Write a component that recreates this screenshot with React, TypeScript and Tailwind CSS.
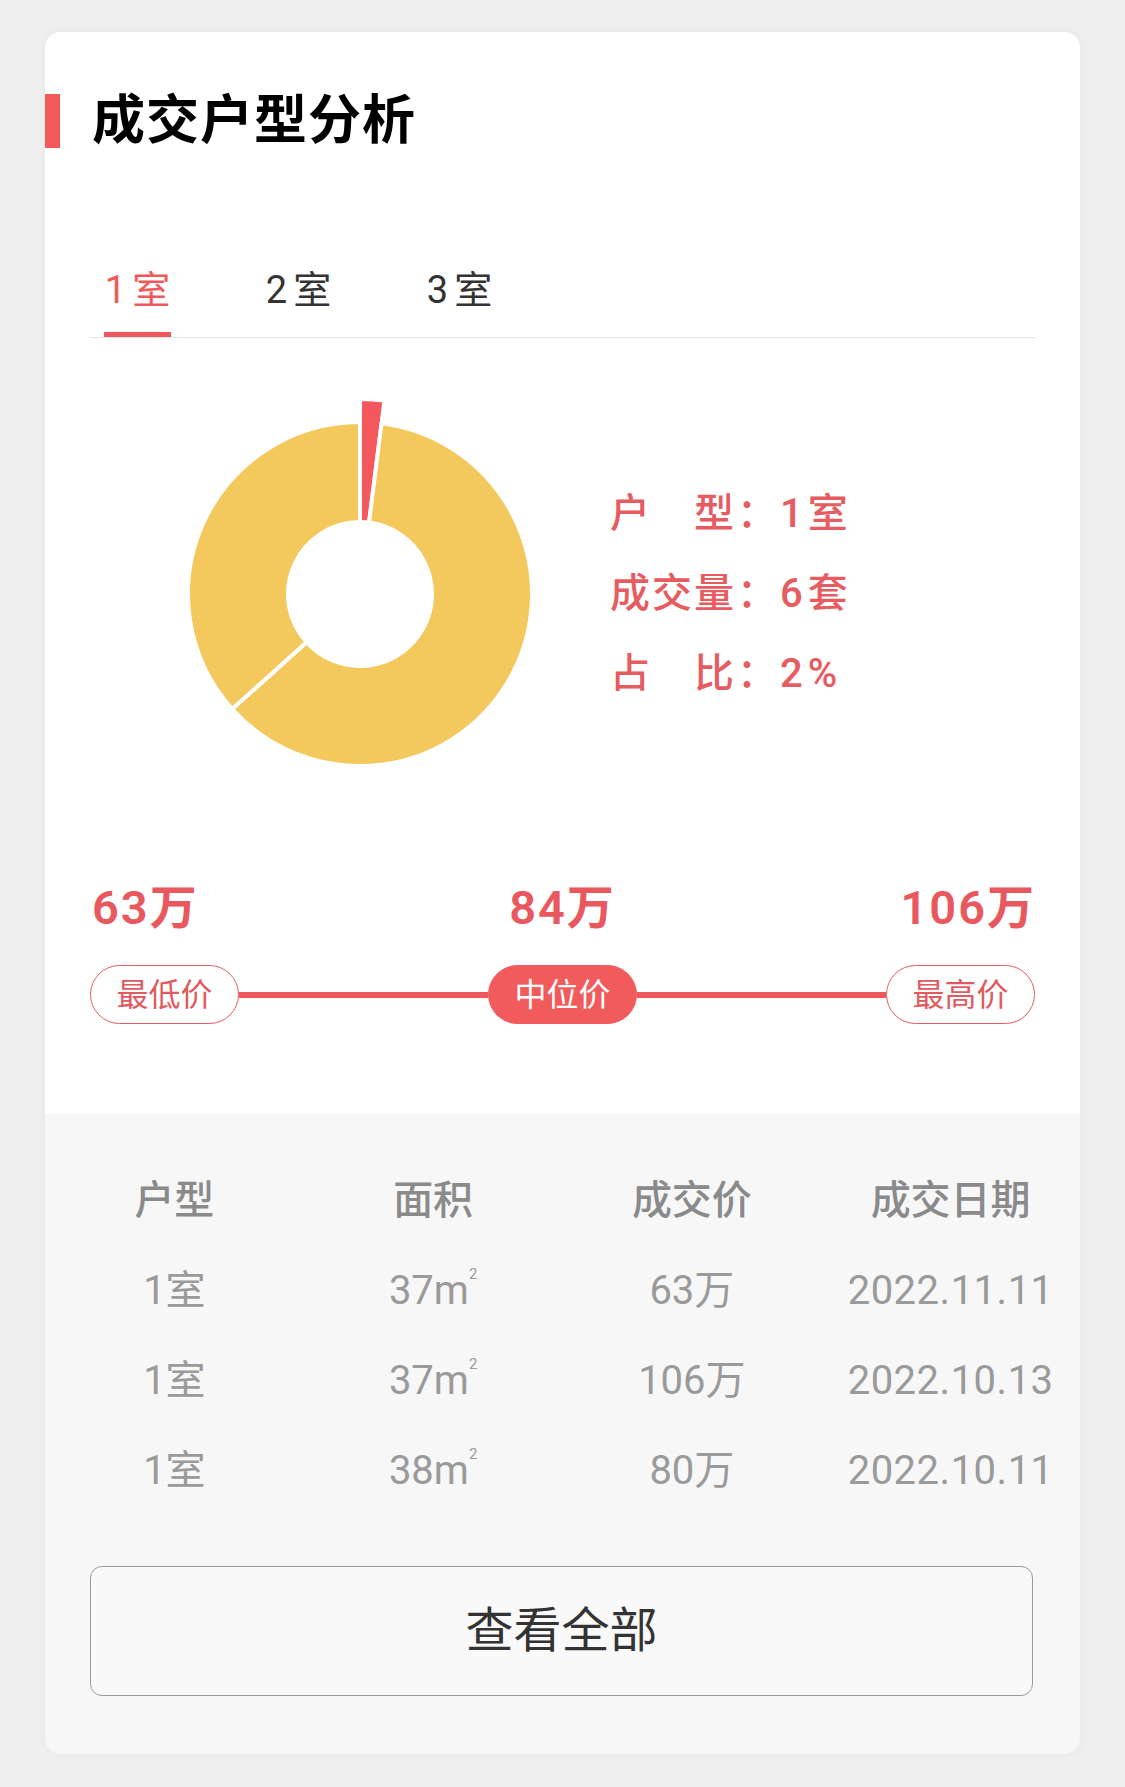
import React from "react";

const FONT = '"Roboto", "Noto Sans CJK SC", sans-serif';

const TABS = ["1室", "2室", "3室"];

const ROWS = [
  { type: "1室", area: "37", price: "63万", date: "2022.11.11" },
  { type: "1室", area: "37", price: "106万", date: "2022.10.13" },
  { type: "1室", area: "38", price: "80万", date: "2022.10.11" },
];

// slices in degrees, clockwise from 12 o'clock
const SLICES = [
  { from: 0, to: 7.2, color: "#f4575c", r: 195 },
  { from: 7.2, to: 228, color: "#f3c85c", r: 172 },
  { from: 228, to: 360, color: "#f3c85c", r: 172 },
];

function pt(r: number, deg: number) {
  const a = (deg * Math.PI) / 180;
  return [200 + r * Math.sin(a), 200 - r * Math.cos(a)];
}

function arc(from: number, to: number, ro: number, ri: number) {
  const large = to - from > 180 ? 1 : 0;
  const [x1, y1] = pt(ro, from);
  const [x2, y2] = pt(ro, to);
  const [x3, y3] = pt(ri, to);
  const [x4, y4] = pt(ri, from);
  return `M${x1} ${y1} A${ro} ${ro} 0 ${large} 1 ${x2} ${y2} L${x3} ${y3} A${ri} ${ri} 0 ${large} 0 ${x4} ${y4} Z`;
}

function Donut() {
  return (
    <svg width="400" height="400" viewBox="0 0 400 400" className="shrink-0">
      {SLICES.map((s, i) => (
        <path key={i} d={arc(s.from, s.to, s.r, 72)} fill={s.color} stroke="#ffffff" strokeWidth="4" strokeLinejoin="round" />
      ))}
    </svg>
  );
}

function Legend({ label, value }: { label: string; value: string }) {
  return (
    <div className="h-[80px] flex items-center text-[40px] leading-none font-medium text-[#e65c60]">
      <span className="w-[124px] flex justify-between">
        {label.split("").map((c, i) => (
          <span key={i}>{c}</span>
        ))}
      </span>
      <span className="w-[46px] text-center">：</span>
      <span className="tracking-[5px]">{value}</span>
    </div>
  );
}

function Pill({ text, active }: { text: string; active?: boolean }) {
  return (
    <div
      className={`w-[149px] h-[59px] shrink-0 rounded-full flex items-center justify-center text-[32px] leading-none border ${
        active ? "bg-[#f25b5b] border-[#f25b5b] text-white" : "bg-white border-[#e45c60] text-[#e05a5f]"
      }`}
    >
      {text}
    </div>
  );
}

export default function App() {
  return (
    <div className="min-h-[1787px] bg-[#efefef] pt-[32px] pb-[32px]" style={{ fontFamily: FONT }}>
      <div className="mx-[45px] rounded-[16px] overflow-hidden shadow-[0_0_12px_rgba(0,0,0,0.04)]">
        {/* white part */}
        <div className="bg-white pt-[62px] pb-[90px]">
          <div className="flex items-center h-[54px]">
            <div className="w-[15px] h-[54px] bg-[#f25a5a]" />
            <h1 className="ml-[32px] text-[53px] leading-none font-bold text-black tracking-[1px]">成交户型分析</h1>
          </div>

          <div className="mx-[45px]">
            <div className="mt-[123px] flex gap-[94px] pl-[14px] border-b border-[#e3e3e3]">
              {TABS.map((t, i) => (
                <div key={t} className="w-[67px] flex flex-col items-center">
                  <span className={`text-[38px] leading-none tracking-[6px] -mr-[6px] ${i === 0 ? "text-[#f0595c]" : "text-[#333333]"}`}>{t}</span>
                  <div className={`mt-[23px] w-full h-[5px] ${i === 0 ? "bg-[#f0595c]" : "bg-transparent"}`} />
                </div>
              ))}
            </div>

            <div className="mt-[56px] flex items-center">
              <div className="ml-[70px]">
                <Donut />
              </div>
              <div className="ml-[50px] flex flex-col">
                <Legend label="户型" value="1室" />
                <Legend label="成交量" value="6套" />
                <Legend label="占比" value="2%" />
              </div>
            </div>

            <div className="mt-[90px] grid grid-cols-3 text-[47px] leading-none font-semibold tracking-[2px] text-[#e8585e]">
              <span className="text-left ml-[2px]">63万</span>
              <span className="text-center">84万</span>
              <span className="text-right -mr-[1px]">106万</span>
            </div>

            <div className="mt-[34px] flex items-center">
              <Pill text="最低价" />
              <div className="flex-1 h-[6px] bg-[#f0595c]" />
              <Pill text="中位价" active />
              <div className="flex-1 h-[6px] bg-[#f0595c]" />
              <Pill text="最高价" />
            </div>
          </div>
        </div>

        {/* gray part */}
        <div className="bg-[#f7f7f7] pt-[42px] pb-[58px]">
          <div className="grid grid-cols-4 h-[90px] items-center text-center text-[40px] leading-none font-medium text-[#8a8a8a]">
            <span>户型</span>
            <span>面积</span>
            <span>成交价</span>
            <span>成交日期</span>
          </div>
          {ROWS.map((r, i) => (
            <div key={i} className="grid grid-cols-4 h-[90px] items-center text-center text-[40px] leading-none text-[#9a9a9a]">
              <span>{r.type}</span>
              <span>
                {r.area}m<sup className="text-[15px] align-top relative top-[3px]">2</sup>
              </span>
              <span>{r.price}</span>
              <span className="tracking-[0.5px]">{r.date}</span>
            </div>
          ))}

          <button className="mt-[50px] mx-[45px] w-[943px] h-[130px] rounded-[12px] border-[1.5px] border-[#9a9a9a] bg-[#f9f9f9] flex items-center justify-center text-[48px] leading-none text-[#333333]">
            查看全部
          </button>
        </div>
      </div>
    </div>
  );
}
